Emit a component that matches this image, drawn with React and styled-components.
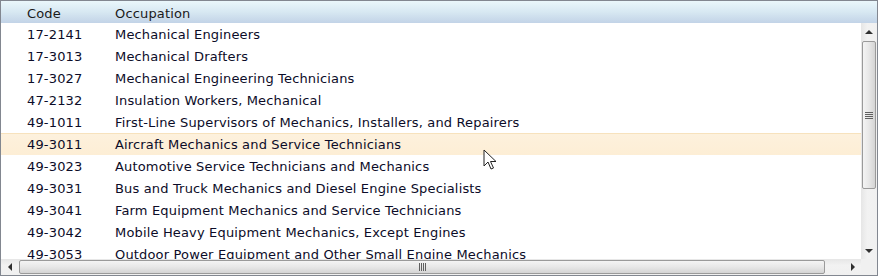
import React from 'react';
import styled, { createGlobalStyle } from 'styled-components';

const GlobalStyle = createGlobalStyle`
  html, body {
    margin: 0;
    padding: 0;
    background: #fff;
  }
  body {
    font-family: "DejaVu Sans", Verdana, sans-serif;
  }
`;

const Grid = styled.div`
  position: relative;
  width: 878px;
  height: 276px;
  box-sizing: border-box;
  border: 1px solid #828790;
  display: flex;
  flex-direction: column;
  overflow: hidden;
  background: #fff;
`;

const Header = styled.div`
  display: flex;
  height: 22px;
  padding-top: 2px;
  box-sizing: border-box;
  flex-shrink: 0;
  background: linear-gradient(to bottom, #eaf7fb 0%, #d7e8f2 50%, #c2d3e7 100%);
  font-size: 13px;
  letter-spacing: 0.16px;
  color: #1a1a1a;
  align-items: center;
`;

const Cell = styled.div`
  width: ${props => props.width || 'auto'};
  flex: ${props => props.grow ? '1' : 'none'};
  padding-left: ${props => props.pad || '0'};
  box-sizing: border-box;
  white-space: nowrap;
`;

const Middle = styled.div`
  display: flex;
  flex: 1;
  min-height: 0;
`;

const Body = styled.div`
  flex: 1;
  overflow: hidden;
`;

const Row = styled.div`
  display: flex;
  align-items: center;
  height: 22px;
  font-size: 13px;
  letter-spacing: 0.16px;
  color: #0c0c28;
  box-sizing: border-box;
  background: ${props => props.hover
    ? 'linear-gradient(to bottom, #fdf1dd 0%, #fdeed5 100%)'
    : 'transparent'};
  border-top: 1px solid ${props => props.hover ? '#f7e2bd' : 'transparent'};
`;

const VScroll = styled.div`
  width: 16px;
  flex-shrink: 0;
  display: flex;
  flex-direction: column;
  background: linear-gradient(to right, #e6e6e6, #f2f2f2 40%, #f0f0f0);
`;

const ArrowBtn = styled.div`
  width: 16px;
  height: 17px;
  flex-shrink: 0;
  display: flex;
  align-items: center;
  justify-content: center;
`;

const VThumb = styled.div`
  margin: 1px 1px 0 1px;
  height: 148px;
  box-sizing: border-box;
  border: 1px solid #9a9a9a;
  border-radius: 2px;
  background: linear-gradient(to right, #f4f4f4 0%, #e7e7e7 50%, #d4d4d4 100%);
  display: flex;
  align-items: center;
  justify-content: center;
`;

const Track = styled.div`
  flex: 1;
`;

const HScrollRow = styled.div`
  display: flex;
  height: 16px;
  flex-shrink: 0;
`;

const HScroll = styled.div`
  flex: 1;
  display: flex;
  align-items: stretch;
  background: linear-gradient(to bottom, #e6e6e6, #f2f2f2 40%, #f0f0f0);
`;

const HArrow = styled.div`
  width: 17px;
  flex-shrink: 0;
  display: flex;
  align-items: center;
  justify-content: center;
`;

const HThumb = styled.div`
  margin: 1px 0 1px 1px;
  width: 806px;
  box-sizing: border-box;
  border: 1px solid #9a9a9a;
  border-radius: 2px;
  background: linear-gradient(to bottom, #f4f4f4 0%, #e7e7e7 50%, #d4d4d4 100%);
  display: flex;
  align-items: center;
  justify-content: center;
`;

const Corner = styled.div`
  width: 16px;
  flex-shrink: 0;
  background: #f0f0f0;
`;

const Cursor = styled.svg`
  position: absolute;
  left: 482px;
  top: 148px;
`;

const rows = [
  ['17-2141', 'Mechanical Engineers'],
  ['17-3013', 'Mechanical Drafters'],
  ['17-3027', 'Mechanical Engineering Technicians'],
  ['47-2132', 'Insulation Workers, Mechanical'],
  ['49-1011', 'First-Line Supervisors of Mechanics, Installers, and Repairers'],
  ['49-3011', 'Aircraft Mechanics and Service Technicians'],
  ['49-3023', 'Automotive Service Technicians and Mechanics'],
  ['49-3031', 'Bus and Truck Mechanics and Diesel Engine Specialists'],
  ['49-3041', 'Farm Equipment Mechanics and Service Technicians'],
  ['49-3042', 'Mobile Heavy Equipment Mechanics, Except Engines'],
  ['49-3053', 'Outdoor Power Equipment and Other Small Engine Mechanics'],
];

const Tri = ({ dir }) => {
  const pts = {
    up: '0,4 4,0 8,4',
    down: '0,0 8,0 4,4',
    left: '4,0 4,8 0,4',
    right: '0,0 0,8 4,4',
  }[dir];
  const vertical = dir === 'up' || dir === 'down';
  return (
    <svg width={vertical ? 8 : 4} height={vertical ? 4 : 8}>
      <polygon points={pts} fill="#303030" />
    </svg>
  );
};

const Grip = ({ vertical }) => (
  <svg width={vertical ? 8 : 7} height={vertical ? 7 : 8}>
    {[0, 2, 4, 6].map(i =>
      vertical
        ? <rect key={i} x="0" y={i} width="8" height="1" fill="#606060" />
        : <rect key={i} x={i} y="0" width="1" height="8" fill="#606060" />
    )}
  </svg>
);

export default function App() {
  return (
    <>
      <GlobalStyle />
      <Grid>
        <Header>
          <Cell width="114px" pad="26px">Code</Cell>
          <Cell grow>Occupation</Cell>
        </Header>
        <Middle>
          <Body>
            {rows.map(([code, name]) => (
              <Row key={code} hover={code === '49-3011'}>
                <Cell width="114px" pad="26px">{code}</Cell>
                <Cell grow>{name}</Cell>
              </Row>
            ))}
          </Body>
          <VScroll>
            <ArrowBtn><Tri dir="up" /></ArrowBtn>
            <VThumb><Grip vertical /></VThumb>
            <Track />
            <ArrowBtn><Tri dir="down" /></ArrowBtn>
          </VScroll>
        </Middle>
        <HScrollRow>
          <HScroll>
            <HArrow><Tri dir="left" /></HArrow>
            <HThumb><Grip /></HThumb>
            <Track />
            <HArrow><Tri dir="right" /></HArrow>
          </HScroll>
          <Corner />
        </HScrollRow>
        <Cursor width="14" height="22" viewBox="0 0 14 22">
          <path d="M1 1 L1 17 L5 13 L8 20 L10.5 19 L7.5 12.5 L13 12.5 Z" fill="#fff" stroke="#222" strokeWidth="1" strokeLinejoin="miter" />
        </Cursor>
      </Grid>
    </>
  );
}
